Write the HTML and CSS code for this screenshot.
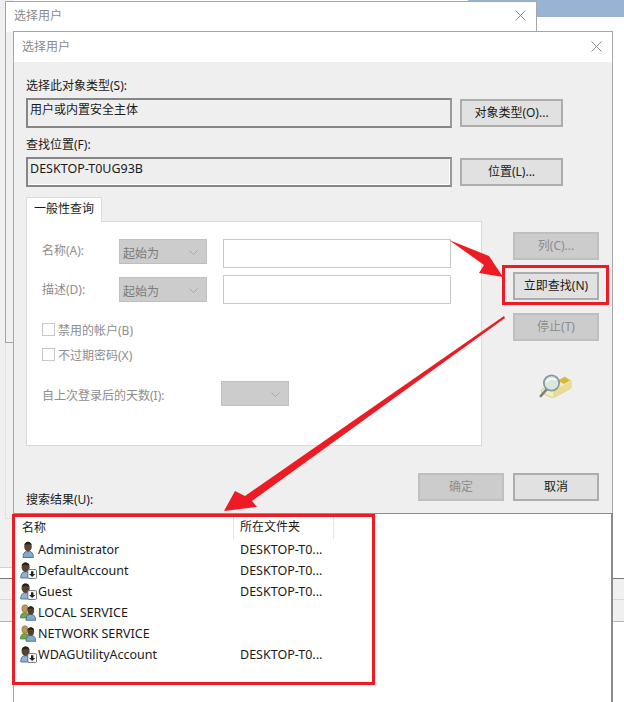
FILE: index.html
```html
<!DOCTYPE html>
<html lang="zh-CN">
<head>
<meta charset="utf-8">
<title>选择用户</title>
<link rel="stylesheet" href="styles.css">
</head>
<body>
<svg width="0" height="0" class="defs">
  <defs>
    <g id="person">
      <path d="M1 16.5c0-3.8 1.4-5.6 3.4-6.2h3.4c2.1.6 3.6 2.4 3.6 6.2z" fill="#7fa9cf" stroke="#3f5f80" stroke-width=".8"/>
      <ellipse cx="6" cy="5.6" rx="3.8" ry="4.9" fill="#5a4632"/>
      <path d="M2.3 4.4C3 -.4 9 -.4 9.8 4.4 8 3 4.2 3 2.3 4.4z" fill="#26211c"/>
    </g>
    <g id="user-down">
      <path d="M.7 16c0-3.8 1.3-5.6 3.2-6.2h3.4c1.9.6 3.2 2.4 3.2 6.2z" fill="#8db3d6" stroke="#3f5f80" stroke-width=".8"/>
      <ellipse cx="5.6" cy="5.2" rx="4" ry="4.8" fill="#54422f"/>
      <path d="M1.7 4C2.4 -.6 8.8 -.6 9.6 4 7.8 2.6 3.6 2.6 1.7 4z" fill="#26211c"/>
      <rect x="7.8" y="7.6" width="8.8" height="8.8" rx="1.2" fill="#fff" stroke="#59636d" stroke-width=".9"/>
      <path d="M11 9.3h2.4v2.8h1.9l-3.1 3-3.1-3H11z" fill="#1f2225"/>
    </g>
    <g id="group">
      <path d="M.4 14c0-3.2 1.3-4.8 3-5.2h3c1.7.4 3 2 3 5.2z" fill="#74a548" stroke="#4d7430" stroke-width=".7"/>
      <ellipse cx="4.9" cy="4.6" rx="3.1" ry="3.9" fill="#b79a5a" stroke="#7f6a32" stroke-width=".6"/>
      <path d="M6 16.3c0-3.6 1.4-5.3 3.3-5.8h3c1.9.5 3.4 2.2 3.4 5.8z" fill="#7fa9cf" stroke="#3f5f80" stroke-width=".8"/>
      <ellipse cx="10.8" cy="6.6" rx="3.3" ry="4.2" fill="#54422f"/>
      <path d="M7.4 5.4C8 1.2 13.6 1.2 14.2 5.4 12.6 4.2 9 4.2 7.4 5.4z" fill="#26211c"/>
    </g>
  </defs>
</svg>

<main class="desktop">
  <div class="wall-blue"></div>
  <div class="wall-left"></div>
  <div class="wall-lower"></div>
  <div class="wall-line"></div>
  <div class="wall-band wall-band-left"></div>
  <div class="wall-band wall-band-right"></div>

  <section class="window back-window">
    <header class="titlebar back-bar">
      <span class="title">选择用户</span>
      <svg class="close" viewBox="0 0 11 11"><path d="M.5.5l10 10M10.5.5l-10 10"/></svg>
    </header>
  </section>

  <section class="window dialog">
    <header class="titlebar">
      <span class="title">选择用户</span>
      <svg class="close" viewBox="0 0 11 11"><path d="M.5.5l10 10M10.5.5l-10 10"/></svg>
    </header>

    <div class="dialog-body">
      <div class="field-block">
        <label class="field-label">选择此对象类型(S):</label>
        <div class="field-row">
          <div class="readonly">用户或内置安全主体</div>
          <button class="btn wide">对象类型(O)...</button>
        </div>
      </div>
      <div class="field-block second">
        <label class="field-label">查找位置(F):</label>
        <div class="field-row">
          <div class="readonly inset">DESKTOP-T0UG93B</div>
          <button class="btn wide">位置(L)...</button>
        </div>
      </div>

      <div class="query-area">
        <div class="query-left">
          <div class="tab">一般性查询</div>
          <div class="tab-panel">
            <div class="query-row">
              <span class="q-label">名称(A):</span>
              <span class="select"><span>起始为</span><svg class="chev" viewBox="0 0 9 5"><path d="M.5.5l4 4 4-4"/></svg></span>
              <span class="text-input"></span>
            </div>
            <div class="query-row row-two">
              <span class="q-label">描述(D):</span>
              <span class="select"><span>起始为</span><svg class="chev" viewBox="0 0 9 5"><path d="M.5.5l4 4 4-4"/></svg></span>
              <span class="text-input"></span>
            </div>
            <div class="check first"><span class="box"></span><span>禁用的帐户(B)</span></div>
            <div class="check"><span class="box"></span><span>不过期密码(X)</span></div>
            <div class="days">
              <span class="days-label">自上次登录后的天数(I):</span>
              <span class="select small"><svg class="chev" viewBox="0 0 9 5"><path d="M.5.5l4 4 4-4"/></svg></span>
            </div>
          </div>
        </div>

        <div class="side">
          <button class="btn side-btn disabled">列(C)...</button>
          <button class="btn side-btn">立即查找(N)</button>
          <button class="btn side-btn disabled">停止(T)</button>
          <svg class="finder" viewBox="0 0 34 24">
            <path d="M2 16L26 3l6 4v7L14 24 3 19z" fill="#f4edbd" stroke="#c4b25c" stroke-width=".6"/>
            <path d="M14 24l18-10V7L14 17z" fill="#e9dc93"/>
            <path d="M19 7l7-4 5 3.5-6 3.5z" fill="#d7b733"/>
            <path d="M8 15L1.8 22" stroke="#7d7d7d" stroke-width="2.6" stroke-linecap="round"/>
            <circle cx="12.5" cy="9" r="7.7" fill="#dbe8dc" stroke="#8398a8" stroke-width="1.7"/>
            <path d="M7 8c2-3 6-4 10-2" fill="none" stroke="#fff" stroke-width="1.6"/>
          </svg>
        </div>
      </div>

      <div class="footer-row">
        <span class="results-label">搜索结果(U):</span>
        <div class="footer-btns">
          <button class="btn side-btn disabled">确定</button>
          <button class="btn side-btn">取消</button>
        </div>
      </div>
    </div>

    <div class="results">
      <div class="res-head">
        <span class="col-name">名称</span>
        <span class="col-folder">所在文件夹</span>
      </div>
      <div class="res-row"><span class="col-name"><svg class="u-icon" viewBox="0 0 17 17"><use href="#person" x="2"/></svg>Administrator</span><span class="col-folder">DESKTOP-T0...</span></div>
      <div class="res-row"><span class="col-name"><svg class="u-icon" viewBox="0 0 17 17"><use href="#user-down"/></svg>DefaultAccount</span><span class="col-folder">DESKTOP-T0...</span></div>
      <div class="res-row"><span class="col-name"><svg class="u-icon" viewBox="0 0 17 17"><use href="#user-down"/></svg>Guest</span><span class="col-folder">DESKTOP-T0...</span></div>
      <div class="res-row"><span class="col-name"><svg class="u-icon" viewBox="0 0 17 17"><use href="#group"/></svg>LOCAL SERVICE</span><span class="col-folder"></span></div>
      <div class="res-row"><span class="col-name"><svg class="u-icon" viewBox="0 0 17 17"><use href="#group"/></svg>NETWORK SERVICE</span><span class="col-folder"></span></div>
      <div class="res-row"><span class="col-name"><svg class="u-icon" viewBox="0 0 17 17"><use href="#user-down"/></svg>WDAGUtilityAccount</span><span class="col-folder">DESKTOP-T0...</span></div>
    </div>
  </section>

  <div class="mark mark-results"></div>
  <div class="mark mark-button"></div>
  <svg class="arrows" viewBox="0 0 624 702">
    <polygon points="449,240 489,256 503,277 479,273 484,265"/>
    <polygon points="504,316 505,318 252,501 257,507 224,511 235,491 245,496"/>
  </svg>
</main>
</body>
</html>
```

FILE: styles.css
```css
* { box-sizing: border-box; }
html, body { margin: 0; padding: 0; }
body { width: 624px; height: 702px; overflow: hidden; background: #fff; }
.defs { position: absolute; }
body, button {
  font-family: "Noto Sans", "Noto Sans CJK SC", sans-serif;
  font-size: 12px;
  color: #1a1a1a;
}
.desktop { position: relative; width: 624px; height: 702px; overflow: hidden; background: #fff; }

/* windows behind the dialog */
.wall-blue { position: absolute; left: 468px; top: 0; width: 156px; height: 17px; background: #98b3d3; }
.wall-left { position: absolute; left: 0; top: 0; width: 14px; height: 567px; background: #f0f0f0; }
.wall-lower { position: absolute; left: 5px; top: 343px; width: 9px; height: 176px; border-left: 1px solid #e2e2e2; border-bottom: 1px solid #e2e2e2; }
.wall-line { position: absolute; left: 0; top: 567px; width: 14px; height: 1px; background: #d0d0d0; }
.wall-band { position: absolute; top: 578px; height: 44px; background: #f0f0f0; border-top: 1px solid #777; border-bottom: 1px solid #b5b5b5; background-image: linear-gradient(#d8d8d8, #d8d8d8); background-size: 100% 1px; background-position: 0 20px; background-repeat: no-repeat; }
.wall-band-left { left: 0; width: 14px; }
.wall-band-right { left: 612px; width: 12px; }

.window { position: absolute; }
.back-window { left: 5px; top: 1px; width: 532px; height: 342px; background: #f0f0f0; border: 1px solid #a6a6a6; }
.dialog { left: 13px; top: 31px; width: 600px; height: 671px; background: #fff; border: 1px solid #a6a6a6; border-bottom: 0; display: flex; flex-direction: column; }

.titlebar { height: 30px; flex: none; display: flex; align-items: center; justify-content: space-between; padding: 0 10px 2px 8px; background: #fff; }
.back-bar { padding-bottom: 4px; }
.title { color: #8a8a8a; }
.close { width: 11px; height: 11px; fill: none; stroke: #8c8c8c; stroke-width: 1; }

.dialog-body { height: 451px; flex: none; background: #efefef; padding: 14px 13px 0 12px; display: flex; flex-direction: column; }

.field-block { display: flex; flex-direction: column; gap: 3px; }
.field-block.second { margin-top: 7px; }
.field-label { height: 19px; line-height: 19px; }
.field-row { display: flex; gap: 8px; align-items: center; }
.readonly { width: 426px; height: 30px; border: 2px solid #8a8a8a; border-color: #868686 #9a9a9a #868686 #868686; padding: 0 2px; line-height: 19px; background: #efefef; }
.readonly.inset { background: #eee; box-shadow: inset -1px -1px 0 #fff; font-size: 12.5px; }

.btn { display: block; padding: 0; background: #e1e1e1; border: 2px solid #adadad; color: #1a1a1a; height: 28px; line-height: 22px; text-align: center; font-family: inherit; font-size: 12px; }
.btn.wide { width: 103px; }
.side-btn { width: 86px; }
.btn.disabled { background: #cccccc; border-color: #bfbfbf; color: #8d8d8d; }

.query-area { display: flex; gap: 31px; margin-top: 10px; }
.query-left { width: 456px; display: flex; flex-direction: column; }
.tab { width: 76px; height: 25px; margin-bottom: -1px; position: relative; z-index: 1; background: #fff; border: 1px solid #d9d9d9; border-bottom: 0; line-height: 22px; text-align: center; }
.tab-panel { height: 225px; background: #fff; border: 1px solid #d9d9d9; color: #8d8d8d; padding: 17px 0 0 15px; display: flex; flex-direction: column; }
.query-row { display: flex; align-items: flex-start; height: 29px; }
.row-two { margin-top: 7px; }
.q-label { width: 77px; height: 25px; line-height: 24px; }
.row-two .q-label { margin-top: 3px; }
.row-two .select { margin-top: 2px; }
.select { width: 88px; height: 25px; background: #cccccc; border: 1px solid #bfbfbf; padding: 2px 8px 0 3px; display: flex; align-items: center; justify-content: space-between; color: #7a7a7a; margin-right: 16px; }
.select.small { width: 68px; justify-content: flex-end; margin: 0; }
.chev { width: 9px; height: 5px; fill: none; stroke: #a9a9a9; stroke-width: 1; }
.text-input { width: 228px; height: 29px; background: #fff; border: 1px solid #c8c8c8; }
.check { display: flex; align-items: center; gap: 3px; height: 13px; margin-top: 12px; }
.check.first { margin-top: 19px; }
.box { width: 13px; height: 13px; background: #fff; border: 1px solid #c8c8c8; }
.days { display: flex; align-items: center; margin-top: 20px; }
.days-label { width: 179px; padding-top: 2px; }

.side { width: 86px; display: flex; flex-direction: column; gap: 12px; padding-top: 35px; }
.side .btn:nth-child(3) { margin-top: 1px; }
.finder { width: 34px; height: 24px; margin: 21px 0 0 26px; }

.footer-row { position: relative; flex: 1; display: flex; align-items: flex-start; justify-content: flex-end; padding-top: 27px; }
.results-label { position: absolute; left: 0; top: 44px; line-height: 19px; }
.footer-btns { display: flex; gap: 9px; }

.results { flex: 1; background: #fff; border-top: 1px solid #8a8a90; border-right: 2px solid #8a8a90; margin-right: -1px; padding-top: 2px; }
.res-head { display: flex; height: 23px; align-items: center; }
.res-head .col-name { border-right: 1px solid #e5e5e5; padding-left: 8px; height: 100%; line-height: 22px; }
.res-head .col-folder { border-right: 1px solid #e5e5e5; height: 100%; line-height: 22px; width: 100px; padding-left: 6px; }
.col-name { width: 220px; display: flex; align-items: center; flex: none; }
.col-folder { padding-left: 6px; }
.res-row { display: flex; height: 21px; align-items: center; font-size: 12.5px; }
.res-row .col-name { padding-left: 6px; }
.u-icon { width: 17px; height: 17px; flex: none; margin-right: 1px; }

/* annotations drawn on top of the screenshot */
.mark { position: absolute; border: 3px solid #ed1c24; }
.mark-results { left: 12px; top: 514px; width: 363px; height: 171px; }
.mark-button { left: 502px; top: 265px; width: 107px; height: 40px; }
.arrows { position: absolute; left: 0; top: 0; width: 624px; height: 702px; fill: #ed1c24; pointer-events: none; }
```
